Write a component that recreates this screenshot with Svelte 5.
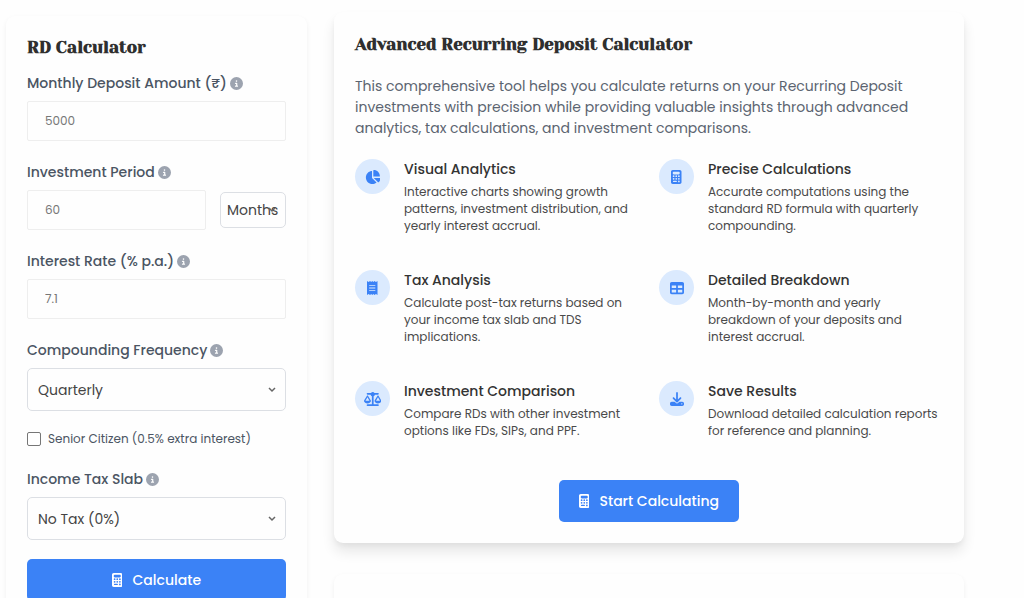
<script lang="ts">
    let deposit = "5000";
    let period = "60";
    let rate = "7.1";
    let senior = false;

    const icons = {
        info: {
            box: "0 0 512 512",
            path: "M256 512A256 256 0 1 0 256 0a256 256 0 1 0 0 512zM216 336h24V272H216c-13.3 0-24-10.7-24-24s10.7-24 24-24h48c13.3 0 24 10.7 24 24v88h8c13.3 0 24 10.7 24 24s-10.7 24-24 24H216c-13.3 0-24-10.7-24-24s10.7-24 24-24zm40-208a32 32 0 1 1 0 64 32 32 0 1 1 0-64z"
        },
        calculator: {
            box: "0 0 384 512",
            path: "M64 0C28.7 0 0 28.7 0 64V448c0 35.3 28.7 64 64 64H320c35.3 0 64-28.7 64-64V64c0-35.3-28.7-64-64-64H64zM96 64H288c17.7 0 32 14.3 32 32v32c0 17.7-14.3 32-32 32H96c-17.7 0-32-14.3-32-32V96c0-17.7 14.3-32 32-32zM64 224a32 32 0 1 0 64 0 32 32 0 1 0-64 0zM160 224a32 32 0 1 0 64 0 32 32 0 1 0-64 0zM256 224a32 32 0 1 0 64 0 32 32 0 1 0-64 0zM64 320a32 32 0 1 0 64 0 32 32 0 1 0-64 0zM160 320a32 32 0 1 0 64 0 32 32 0 1 0-64 0zM256 320a32 32 0 1 0 64 0 32 32 0 1 0-64 0zM96 392H192a24 24 0 1 1 0 48H96a24 24 0 1 1 0-48zM256 416a32 32 0 1 0 64 0 32 32 0 1 0-64 0z"
        },
        pie: {
            box: "0 0 576 512",
            path: "M304 240V16.6c0-9 7-16.6 16-16.6C443.7 0 544 100.3 544 224c0 9-7.6 16-16.6 16H304zM32 272C32 150.7 122.1 50.3 239 34.3c9.2-1.3 17 6.1 17 15.4V288L412.5 444.5c6.7 6.7 6.2 17.7-1.5 23.1C371.8 495.6 323.8 512 272 512C139.5 512 32 404.6 32 272zm526.4 16c9.3 0 16.6 7.8 15.4 17c-7.7 55.9-34.6 105.6-73.9 142.3c-6 5.6-15.4 5.2-21.2-.7L320 288H558.4z"
        },
        receipt: {
            box: "0 0 384 512",
            path: "M0 0L56 40L112 0L152 40L192 0L232 40L272 0L328 40L384 0V512L328 472L272 512L232 472L192 512L152 472L112 512L56 472L0 512zM80 144V176H304V144zM80 240V272H304V240zM80 336V368H304V336z"
        },
        table: {
            box: "0 0 512 512",
            path: "M64 256V160H224v96H64zm0 64H224v96H64V320zm224 96V320H448v96H288zM448 256H288V160H448v96zM64 32C28.7 32 0 60.7 0 96V416c0 35.3 28.7 64 64 64H448c35.3 0 64-28.7 64-64V96c0-35.3-28.7-64-64-64H64z"
        },
        scale: {
            box: "0 0 640 512",
            path: "M384 32H512c17.7 0 32 14.3 32 32s-14.3 32-32 32H398.4c-5.2 25.8-22.9 47.1-46.4 57.3V448H512c17.7 0 32 14.3 32 32s-14.3 32-32 32H320 128c-17.7 0-32-14.3-32-32s14.3-32 32-32H288V153.3c-23.5-10.3-41.2-31.6-46.4-57.3H128c-17.7 0-32-14.3-32-32s14.3-32 32-32H256c14.6-19.4 37.8-32 64-32s49.4 12.6 64 32zm55.6 288H584.4L512 195.8 439.6 320zM512 416c-62.9 0-115.2-34-126-78.9c-2.6-11 1-22.3 6.7-32.1l95.2-163.2c5-8.6 14.2-13.8 24.1-13.8s19.1 5.3 24.1 13.8l95.2 163.2c5.7 9.8 9.3 21.1 6.7 32.1C627.2 382 574.9 416 512 416zM126.8 195.8L54.4 320H199.3L126.8 195.8zM.9 337.1c-2.6-11 1-22.3 6.7-32.1l95.2-163.2c5-8.6 14.2-13.8 24.1-13.8s19.1 5.3 24.1 13.8l95.2 163.2c5.7 9.8 9.3 21.1 6.7 32.1C242 382 189.7 416 126.8 416S11.7 382 .9 337.1z"
        },
        download: {
            box: "0 0 512 512",
            path: "M288 32c0-17.7-14.3-32-32-32s-32 14.3-32 32V274.7l-73.4-73.4c-12.5-12.5-32.8-12.5-45.3 0s-12.5 32.8 0 45.3l128 128c12.5 12.5 32.8 12.5 45.3 0l128-128c12.5-12.5 12.5-32.8 0-45.3s-32.8-12.5-45.3 0L288 274.7V32zM64 352c-35.3 0-64 28.7-64 64v32c0 35.3 28.7 64 64 64H448c35.3 0 64-28.7 64-64V416c0-35.3-28.7-64-64-64H346.5l-45.3 45.3c-25 25-65.5 25-90.5 0L165.5 352H64zm368 56a24 24 0 1 1 0 48 24 24 0 1 1 0-48z"
        }
    };

    const features = [
        {icon: "pie", title: "Visual Analytics", text: "Interactive charts showing growth patterns, investment distribution, and yearly interest accrual."},
        {icon: "calculator", title: "Precise Calculations", text: "Accurate computations using the standard RD formula with quarterly compounding."},
        {icon: "receipt", title: "Tax Analysis", text: "Calculate post-tax returns based on your income tax slab and TDS implications."},
        {icon: "table", title: "Detailed Breakdown", text: "Month-by-month and yearly breakdown of your deposits and interest accrual."},
        {icon: "scale", title: "Investment Comparison", text: "Compare RDs with other investment options like FDs, SIPs, and PPF."},
        {icon: "download", title: "Save Results", text: "Download detailed calculation reports for reference and planning."}
    ];
</script>

{#snippet icon(name)}
    <svg class="icon" viewBox={icons[name].box} aria-hidden="true">
        <path fill-rule="evenodd" d={icons[name].path} />
    </svg>
{/snippet}

{#snippet chevron()}
    <svg class="chevron" viewBox="0 0 8 6" aria-hidden="true">
        <path d="M1 1l3 3 3-3" />
    </svg>
{/snippet}

<div class="page">
    <form class="card form" on:submit|preventDefault>
        <h2>RD Calculator</h2>

        <div class="field">
            <label for="deposit">Monthly Deposit Amount (₹) {@render icon("info")}</label>
            <input id="deposit" class="text" type="text" inputmode="numeric" bind:value={deposit}>
        </div>

        <div class="field">
            <label for="period">Investment Period {@render icon("info")}</label>
            <div class="period">
                <input id="period" class="text" type="text" inputmode="numeric" bind:value={period}>
                <div class="select unit">
                    <select aria-label="Period unit">
                        <option>Months</option>
                        <option>Years</option>
                    </select>
                    {@render chevron()}
                </div>
            </div>
        </div>

        <div class="field">
            <label for="rate">Interest Rate (% p.a.) {@render icon("info")}</label>
            <input id="rate" class="text" type="text" inputmode="decimal" bind:value={rate}>
        </div>

        <div class="field">
            <label for="frequency">Compounding Frequency {@render icon("info")}</label>
            <div class="select">
                <select id="frequency">
                    <option>Quarterly</option>
                    <option>Monthly</option>
                    <option>Yearly</option>
                </select>
                {@render chevron()}
            </div>
        </div>

        <div class="check">
            <input id="senior" type="checkbox" bind:checked={senior}>
            <label for="senior">Senior Citizen (0.5% extra interest)</label>
        </div>

        <div class="field">
            <label for="slab">Income Tax Slab {@render icon("info")}</label>
            <div class="select">
                <select id="slab">
                    <option>No Tax (0%)</option>
                    <option>5%</option>
                    <option>20%</option>
                    <option>30%</option>
                </select>
                {@render chevron()}
            </div>
        </div>

        <button class="primary" type="submit">{@render icon("calculator")} Calculate</button>
    </form>

    <main>
        <section class="card intro">
            <h2>Advanced Recurring Deposit Calculator</h2>
            <p class="lead">This comprehensive tool helps you calculate returns on your Recurring Deposit investments with precision while providing valuable insights through advanced analytics, tax calculations, and investment comparisons.</p>
            <div class="features">
                {#each features as feature}
                    <div class="feature">
                        <span class="badge">{@render icon(feature.icon)}</span>
                        <div>
                            <h3>{feature.title}</h3>
                            <p>{feature.text}</p>
                        </div>
                    </div>
                {/each}
            </div>
            <button class="primary start" type="button">{@render icon("calculator")} Start Calculating</button>
        </section>
        <section class="card next"></section>
    </main>
</div>

<style>
    :global(body) {
        background: #fefefe;
        overflow: hidden;
    }
    .page {
        display: grid;
        grid-template-columns: 301px 1fr;
        align-items: start;
        gap: 27px;
        padding: 12px 60px 0 6px;
        font-family: Poppins, Inter, "Noto Sans", sans-serif;
        font-size: 14px;
        color: #333333;
    }
    .card {
        box-sizing: border-box;
        padding: 20px 21px;
        border-radius: 9px;
        background: #fefefe;
    }
    h2, h3, p {
        margin: 0;
    }
    h2 {
        font-family: "Yeseva One", "DM Serif Display", "Liberation Serif", serif;
        font-size: 17px;
        line-height: 24px;
        font-weight: 700;
        color: #2f2f2f;
    }
    .icon {
        height: 14px;
        fill: currentColor;
    }

    .form {
        display: flex;
        flex-direction: column;
        gap: 19px;
        margin-top: 4px;
        padding-top: 19px;
        box-shadow: 0 2px 5px rgba(0, 0, 0, 0.06);
    }
    .form h2 {
        margin-bottom: -7px;
    }
    .field label {
        display: flex;
        align-items: center;
        gap: 3px;
        margin-bottom: 6px;
        line-height: 24px;
        font-weight: 500;
        color: #4b5563;
    }
    .field .icon {
        height: 13px;
        color: #9ca3af;
    }
    .text {
        box-sizing: border-box;
        width: 100%;
        min-width: 0;
        height: 40px;
        padding: 0 17px;
        border: 1px solid #eeeeee;
        border-radius: 2px;
        background: #fefefe;
        font: inherit;
        font-size: 12px;
        color: #777777;
    }
    .period {
        display: flex;
        align-items: center;
        gap: 14px;
    }
    .select {
        position: relative;
    }
    select {
        display: block;
        appearance: none;
        box-sizing: border-box;
        width: 100%;
        height: 43px;
        padding: 0 10px;
        border: 1px solid #dcdfe4;
        border-radius: 5px;
        background: #fefefe;
        font: inherit;
        color: #444444;
    }
    .unit {
        flex: 0 0 66px;
    }
    .unit select {
        height: 36px;
        padding: 0 6px;
    }
    .chevron {
        position: absolute;
        top: 50%;
        right: 10px;
        width: 8px;
        height: 6px;
        margin-top: -3px;
        fill: none;
        stroke: #666666;
        stroke-width: 1.5;
        pointer-events: none;
    }
    .check {
        display: flex;
        align-items: center;
        gap: 7px;
        height: 18px;
        font-size: 12px;
        color: #4b5563;
    }
    .check input {
        appearance: none;
        box-sizing: border-box;
        width: 14px;
        height: 14px;
        margin: 0;
        border: 1px solid #767676;
        border-radius: 2px;
        background: #ffffff;
    }
    .check input:checked {
        background: #3b82f6;
    }
    .primary {
        display: flex;
        align-items: center;
        justify-content: center;
        gap: 10px;
        height: 42px;
        padding: 0 20px;
        border: 0;
        border-radius: 5px;
        background: #3b82f6;
        font: inherit;
        font-weight: 500;
        color: #ffffff;
        cursor: pointer;
    }

    .intro {
        padding-bottom: 21px;
        box-shadow: 0 9px 13px rgba(0, 0, 0, 0.09), 0 3px 5px rgba(0, 0, 0, 0.04);
    }
    .lead {
        margin: 20px 0;
        line-height: 21px;
        color: #5b6470;
    }
    .features {
        display: grid;
        grid-template-columns: 1fr 1fr;
        gap: 36px 20px;
    }
    .feature {
        display: flex;
        gap: 14px;
    }
    .badge {
        display: flex;
        flex: none;
        align-items: center;
        justify-content: center;
        width: 35px;
        height: 35px;
        border-radius: 50%;
        background: #dbeafe;
        color: #3b82f6;
    }
    h3 {
        margin-bottom: 3px;
        font-size: 14px;
        line-height: 21px;
        font-weight: 500;
    }
    .feature p {
        font-size: 12px;
        line-height: 17px;
        color: #4a4a4a;
    }
    .start {
        margin: 41px auto 0;
    }
    .next {
        height: 60px;
        margin-top: 31px;
        box-shadow: 0 2px 5px rgba(0, 0, 0, 0.06);
    }
</style>
